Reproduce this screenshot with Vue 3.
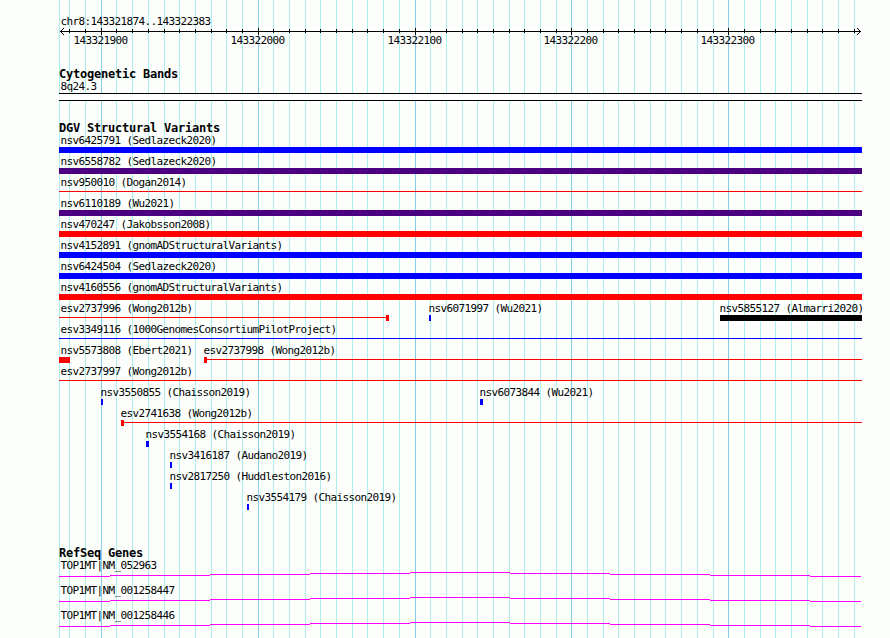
<template>
  <div class="browser">
    <svg class="grid-lines" width="890" height="638" shape-rendering="crispEdges">
      <rect x="59" y="0" width="1" height="638" class="minor" />
      <rect
        v-for="t in ticks"
        :key="t.x"
        :x="t.x"
        y="0"
        width="1"
        height="638"
        :class="t.major ? 'major' : 'minor'"
      />
    </svg>

    <!-- ruler -->
    <section class="ruler">
      <div class="label">chr8:143321874..143322383</div>
      <svg class="axis" width="803" height="8" viewBox="59 28 803 8" shape-rendering="crispEdges">
        <rect x="60" y="31" width="801" height="1" />
        <rect
          v-for="t in ticks"
          :key="t.x"
          :x="t.x"
          :y="t.major ? 28 : 29"
          width="1"
          :height="t.major ? 7 : 4"
        />
        <rect v-for="(a, i) in arrows" :key="i" :x="a[0]" :y="a[1]" width="1" height="1" />
      </svg>
      <div class="tick-labels">
        <span
          v-for="t in majorTicks"
          :key="t.x"
          class="label"
          :style="{ marginLeft: t.x - 28 - LEFT + 'px' }"
        >{{ t.pos }}</span>
      </div>
    </section>

    <!-- cytogenetic bands -->
    <section class="bands">
      <h3>Cytogenetic Bands</h3>
      <div class="label">8q24.3</div>
      <div class="band"></div>
    </section>

    <!-- structural variants -->
    <section class="variants">
      <h3>DGV Structural Variants</h3>
      <div v-for="(row, i) in rows" :key="i" class="row">
        <div
          v-for="f in row"
          :key="f.name"
          class="feature"
          :style="{ marginLeft: f.start - LEFT + 'px', width: f.end - f.start + 'px' }"
        >
          <div class="label" :class="{ shifted: f.start > LEFT }">{{ f.name }}</div>
          <div class="glyph" :class="[f.color, f.type]"></div>
        </div>
      </div>
    </section>

    <!-- genes -->
    <section class="genes">
      <h3>RefSeq Genes</h3>
      <div v-for="g in genes" :key="g" class="gene">
        <div class="label">{{ g }}</div>
        <svg width="803" height="5" viewBox="59 0 803 5" shape-rendering="crispEdges">
          <rect
            v-for="s in intron"
            :key="s.x"
            :x="s.x"
            :y="s.y"
            :width="s.w"
            height="1"
            fill="#ff00ff"
          />
        </svg>
      </div>
    </section>
  </div>
</template>

<script setup>
const LEFT = 59;
const RIGHT = 862;

// one tick every 10 bp, a major one every 100 bp
const ticks = [];
for (let k = -2; k <= 48; k++) {
  ticks.push({
    x: Math.floor(101.3 + k * 15.686),
    pos: 143321900 + k * 10,
    major: k % 10 === 0
  });
}
const majorTicks = ticks.filter(t => t.major);

const arrows = [
  [61, 30], [62, 29], [63, 28], [61, 32], [62, 33], [63, 34],
  [859, 30], [858, 29], [857, 28], [859, 32], [858, 33], [857, 34]
];

const sv = (name, color, type = 'bar', start = LEFT, end = RIGHT) => ({ name, color, type, start, end });

const rows = [
  [sv('nsv6425791 (Sedlazeck2020)', 'blue')],
  [sv('nsv6558782 (Sedlazeck2020)', 'indigo')],
  [sv('nsv950010 (Dogan2014)', 'red', 'line')],
  [sv('nsv6110189 (Wu2021)', 'indigo')],
  [sv('nsv470247 (Jakobsson2008)', 'red')],
  [sv('nsv4152891 (gnomADStructuralVariants)', 'blue')],
  [sv('nsv6424504 (Sedlazeck2020)', 'blue')],
  [sv('nsv4160556 (gnomADStructuralVariants)', 'red')],
  [
    sv('esv2737996 (Wong2012b)', 'red', 'line cap-end', LEFT, 389),
    sv('nsv6071997 (Wu2021)', 'blue', 'bar', 429, 431),
    sv('nsv5855127 (Almarri2020)', 'black', 'bar', 720)
  ],
  [sv('esv3349116 (1000GenomesConsortiumPilotProject)', 'blue', 'line')],
  [
    sv('nsv5573808 (Ebert2021)', 'red', 'bar', LEFT, 70),
    sv('esv2737998 (Wong2012b)', 'red', 'line cap-start', 204)
  ],
  [sv('esv2737997 (Wong2012b)', 'red', 'line')],
  [
    sv('nsv3550855 (Chaisson2019)', 'blue', 'bar', 101, 103),
    sv('nsv6073844 (Wu2021)', 'blue', 'bar', 480, 483)
  ],
  [sv('esv2741638 (Wong2012b)', 'red', 'line cap-start', 121)],
  [sv('nsv3554168 (Chaisson2019)', 'blue', 'bar', 146, 149)],
  [sv('nsv3416187 (Audano2019)', 'blue', 'bar', 170, 172)],
  [sv('nsv2817250 (Huddleston2016)', 'blue', 'bar', 170, 172)],
  [sv('nsv3554179 (Chaisson2019)', 'blue', 'bar', 247, 249)]
];

const genes = ['TOP1MT|NM_052963', 'TOP1MT|NM_001258447', 'TOP1MT|NM_001258446'];

// stepped intron line, peak in the middle
const stops = [59, 110, 210, 310, 410, 510, 610, 710, 810, 861];
const intron = stops.slice(0, -1).map((x, i) => ({
  x,
  y: Math.abs(4 - i),
  w: stops[i + 1] - x
}));
</script>

<style>
body {
  margin: 0;
  background: #fdfffc;
}
</style>

<style scoped>
.browser {
  position: relative;
  width: 890px;
  height: 638px;
  box-sizing: border-box;
  padding: 15px 28px 0 59px;
  overflow: hidden;
  background: #fdfffc;
  color: #000;
  font-family: 'DejaVu Sans Mono', 'Liberation Mono', monospace;
}
.grid-lines {
  position: absolute;
  left: 0;
  top: 0;
}
.minor { fill: #afeeee; }
.major { fill: #87ceeb; }

section {
  position: relative;
}
svg {
  display: block;
}
.label {
  height: 13px;
  line-height: 13px;
  padding-left: 1.4px;
  font-size: 11px;
  letter-spacing: -0.622px;
  white-space: pre;
}
.label.shifted {
  margin-left: -2px;
}
h3 {
  margin: 0;
  height: 13px;
  line-height: 15px;
  font-size: 12px;
  letter-spacing: -0.224px;
  font-weight: bold;
  white-space: pre;
}

/* ruler */
.ruler {
  height: 52px;
}
.tick-labels {
  display: grid;
  margin-top: -2px;
}
.tick-labels .label {
  grid-area: 1 / 1;
  padding-left: 0.4px;
}

/* bands */
.bands {
  height: 54px;
}
.band {
  height: 8px;
  box-sizing: border-box;
  border-top: 1px solid #000;
  border-bottom: 1px solid #000;
  background: #fff;
}

/* variants */
.variants {
  height: 425px;
}
.row {
  display: grid;
  height: 21px;
}
.feature {
  grid-area: 1 / 1;
}
.glyph {
  height: 6px;
  background: currentColor;
}
.glyph.line {
  background: linear-gradient(currentColor, currentColor) 0 2px / 100% 1px no-repeat;
}
.glyph.cap-start {
  border-left: 3px solid currentColor;
}
.glyph.cap-end {
  border-right: 3px solid currentColor;
}
.blue { color: #0000ff; }
.indigo { color: #4b0082; }
.red { color: #ff0000; }
.black { color: #000; }

/* genes */
.gene {
  height: 25px;
}
</style>
